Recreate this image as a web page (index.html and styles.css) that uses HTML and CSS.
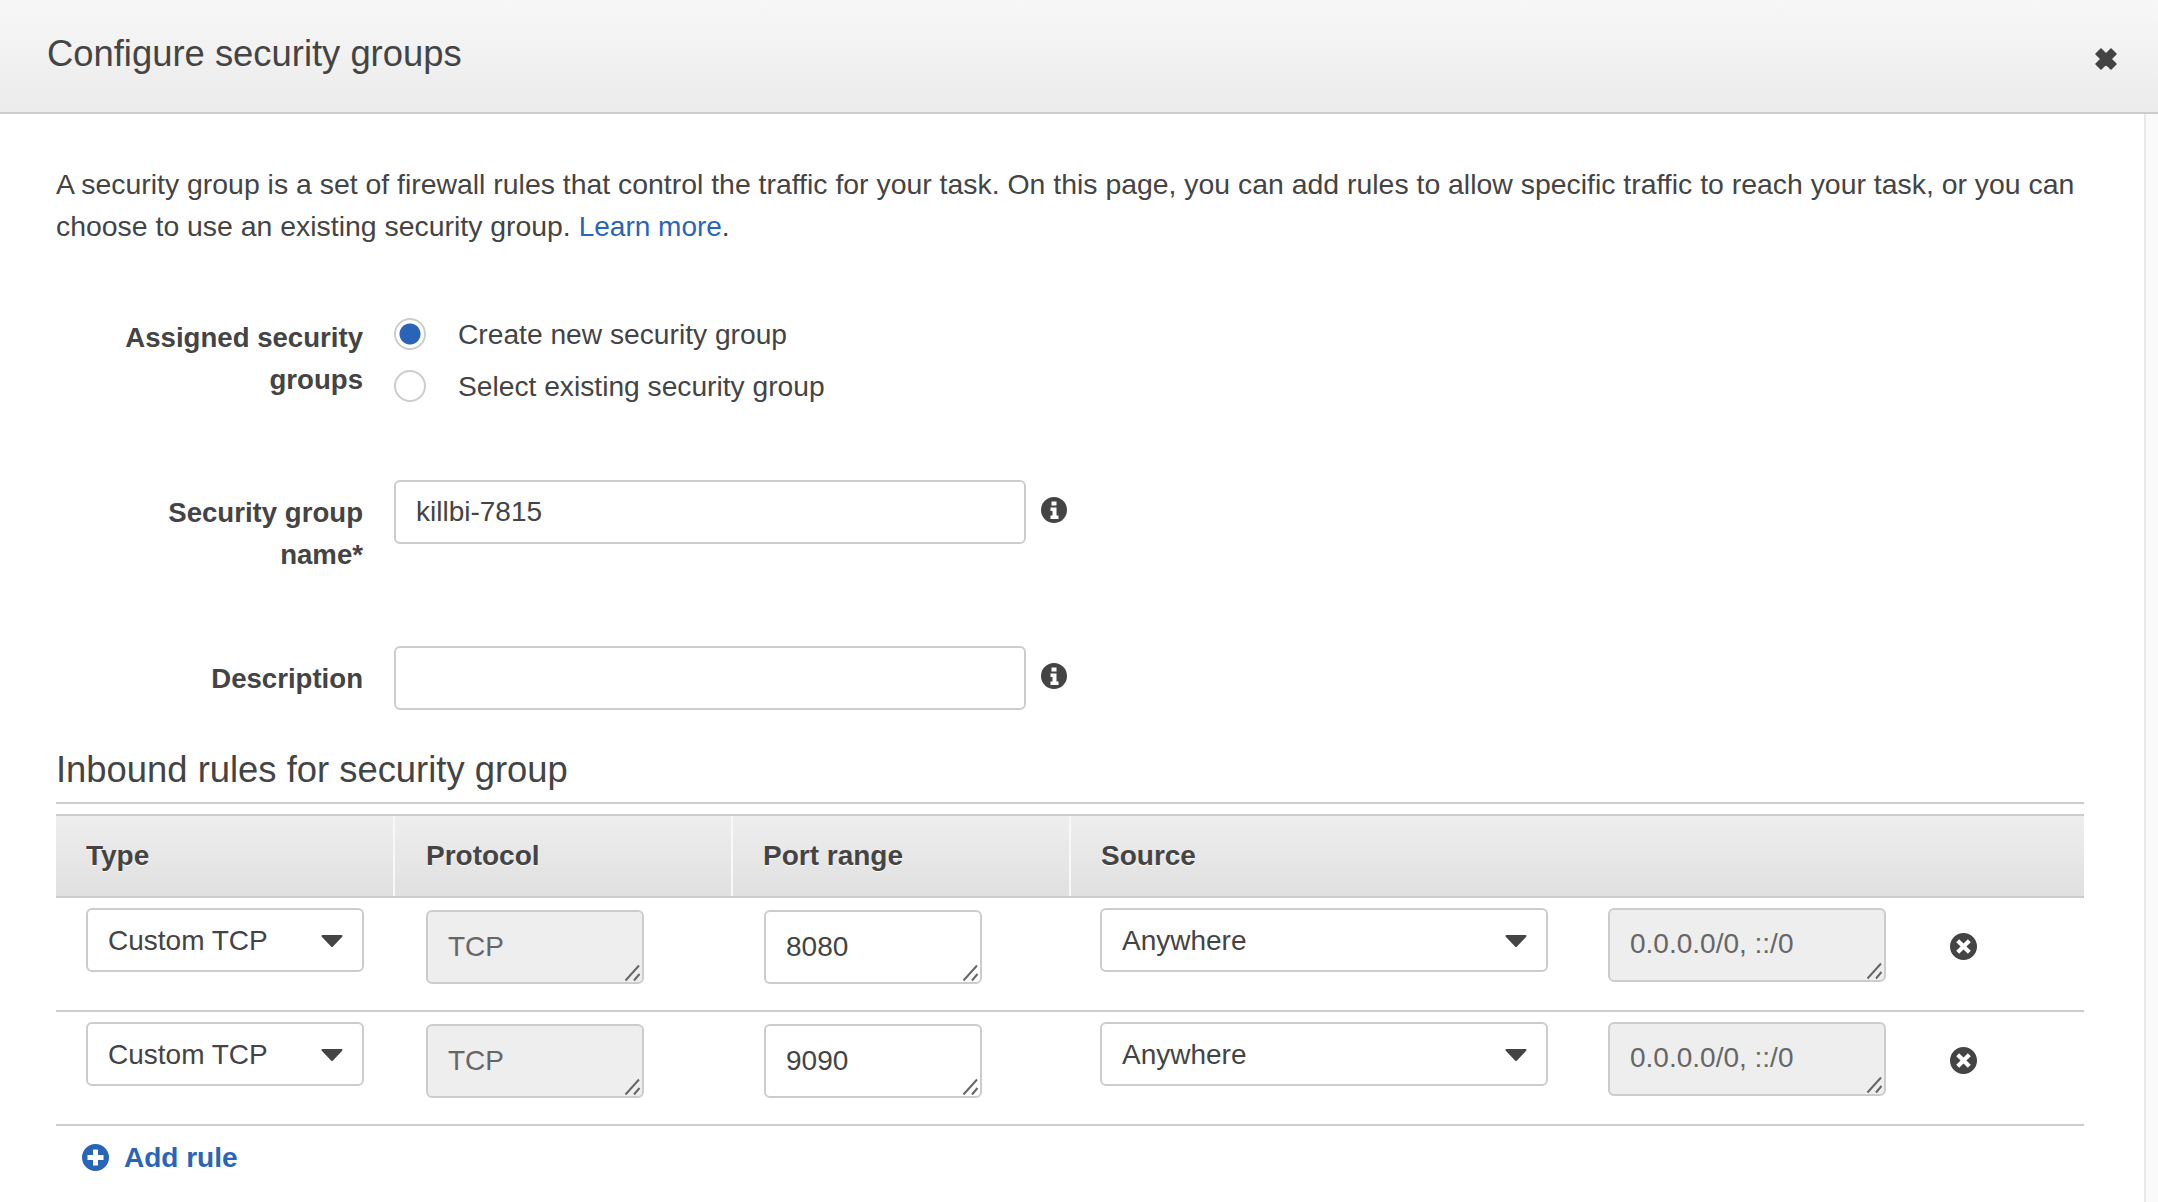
FILE: index.html

```html
<!DOCTYPE html>
<html lang="en">
<head>
  <meta charset="UTF-8" />
  <title>Configure security groups</title>
  <link rel="stylesheet" href="styles.css">
</head>
<body>
  <svg class="defs" width="0" height="0">
    <symbol id="caret" viewBox="0 0 22 12"><path d="M1.500 1 H20.500 L11 11 Z" fill="#444" stroke="#444" stroke-width="2" stroke-linejoin="round"/></symbol>
    <symbol id="info" viewBox="0 0 26 26"><path fill-rule="evenodd" d="M13 0a13 13 0 1 0 0 26a13 13 0 1 0 0-26z M10.500 4.500h5v4h-5z M9.500 10.500h6v8h2v3.500h-8v-3.500h2v-4.500h-2z" fill="#444"/></symbol>
    <symbol id="remove" viewBox="0 0 26 26"><path fill-rule="evenodd" d="M13 0a13 13 0 1 0 0 26a13 13 0 1 0 0-26z M8.800 6l4.200 4.200L17.200 6L20 8.800L15.800 13L20 17.200L17.200 20L13 15.800L8.800 20L6 17.200L10.200 13L6 8.800z" fill="#444"/></symbol>
    <symbol id="grip" viewBox="0 0 18 18"><path d="M1.500 16.500L15 1.500M10 16.500L15.500 10" stroke="#666" stroke-width="2" fill="none"/></symbol>
  </svg>

  <div class="modal-header">
    <h1>Configure security groups</h1>
    <svg class="close" viewBox="0 0 22 22"><path d="M1 6L6 1L11 6L16 1L21 6L16 11L21 16L16 21L11 16L6 21L1 16L6 11Z" fill="#444" stroke="#444" stroke-width="1.500" stroke-linejoin="round"/></svg>
  </div>

  <div class="modal-body">
    <div class="content">
      <p class="intro">A security group is a set of firewall rules that control the traffic for your task. On this page, you can add rules to allow specific traffic to reach your task, or you can choose to use an existing security group. <a href="#">Learn more</a>.</p>

      <div class="form-row row-radios">
        <label class="form-label">Assigned security groups</label>
        <div class="radios">
          <div class="radio-line"><span class="radio checked"></span>Create new security group</div>
          <div class="radio-line"><span class="radio"></span>Select existing security group</div>
        </div>
      </div>

      <div class="form-row row-name">
        <label class="form-label">Security group name*</label>
        <div class="text-input">killbi-7815</div>
        <svg class="info"><use href="#info"/></svg>
      </div>

      <div class="form-row row-desc">
        <label class="form-label">Description</label>
        <div class="text-input"></div>
        <svg class="info"><use href="#info"/></svg>
      </div>

      <h2>Inbound rules for security group</h2>

      <div class="rules">
        <div class="rules-head">
          <div class="th">Type</div>
          <div class="th">Protocol</div>
          <div class="th">Port range</div>
          <div class="th">Source</div>
        </div>

        <div class="rule">
          <div class="cell">
            <div class="select select-type">Custom TCP<svg class="caret"><use href="#caret"/></svg></div>
          </div>
          <div class="cell">
            <div class="area disabled">TCP<svg class="grip"><use href="#grip"/></svg></div>
          </div>
          <div class="cell">
            <div class="area">8080<svg class="grip"><use href="#grip"/></svg></div>
          </div>
          <div class="cell source">
            <div class="select select-source">Anywhere<svg class="caret"><use href="#caret"/></svg></div>
            <div class="area disabled cidr">0.0.0.0/0, ::/0<svg class="grip"><use href="#grip"/></svg></div>
            <svg class="remove"><use href="#remove"/></svg>
          </div>
        </div>

        <div class="rule">
          <div class="cell">
            <div class="select select-type">Custom TCP<svg class="caret"><use href="#caret"/></svg></div>
          </div>
          <div class="cell">
            <div class="area disabled">TCP<svg class="grip"><use href="#grip"/></svg></div>
          </div>
          <div class="cell">
            <div class="area">9090<svg class="grip"><use href="#grip"/></svg></div>
          </div>
          <div class="cell source">
            <div class="select select-source">Anywhere<svg class="caret"><use href="#caret"/></svg></div>
            <div class="area disabled cidr">0.0.0.0/0, ::/0<svg class="grip"><use href="#grip"/></svg></div>
            <svg class="remove"><use href="#remove"/></svg>
          </div>
        </div>
      </div>

      <a class="add-rule" href="#">
        <svg viewBox="0 0 27 27"><path fill-rule="evenodd" d="M13.500 0a13.500 13.500 0 1 0 0 27a13.500 13.500 0 1 0 0-27z M11 5.500h5v5.500h5.500v5h-5.500v5.500h-5v-5.500h-5.500v-5h5.500z" fill="#2a64b8"/></svg>
        Add rule
      </a>
    </div>
  </div>
</body>
</html>
```

FILE: styles.css

```css
* {
  box-sizing: border-box;
}
html, body {
  height: 100%;
}
body {
  margin: 0;
  display: flex;
  flex-direction: column;
  overflow: hidden;
  font-family: "Liberation Sans", Arial, sans-serif;
  font-size: 28px;
  color: #444;
  background: #fff;
}
.defs {
  position: absolute;
}
a {
  color: #2a64b8;
  text-decoration: none;
}

.modal-header {
  height: 114px;
  flex: none;
  display: flex;
  justify-content: space-between;
  padding: 0 41px 0 47px;
  background: linear-gradient(to bottom, #f7f7f7, #ebebeb);
  border-bottom: 2px solid #ccc;
}
.modal-header h1 {
  margin: 35px 0 0;
  font-size: 36.400px;
  line-height: 38px;
  font-weight: normal;
}
.close {
  width: 22px;
  height: 22px;
  margin-top: 48px;
}

.modal-body {
  flex: 1;
  padding-right: 12px;
  background: #fafafa;
}
.content {
  height: 100%;
  background: #fff;
  border-right: 2px solid #e8e8e8;
  padding: 49px 60px 0 56px;
}
.intro {
  margin: 0;
  font-size: 28.420px;
  line-height: 42px;
}
.intro a {
  font-size: 28px;
  line-height: 1;
}

.form-row {
  display: flex;
  align-items: flex-start;
}
.form-label {
  width: 307px;
  margin-right: 31px;
  padding-left: 57px;
  flex: none;
  text-align: right;
  font-size: 27.600px;
  font-weight: bold;
  line-height: 42px;
}
.row-radios {
  margin-top: 70px;
}
.row-name {
  margin-top: 58px;
}
.row-name .form-label,
.row-desc .form-label {
  padding-top: 12px;
}
.row-desc {
  margin-top: 70px;
}
.radios {
  margin-top: 1px;
}
.radio-line {
  display: flex;
  align-items: center;
  height: 32px;
  margin-bottom: 20px;
  font-size: 28.200px;
}
.radio {
  width: 32px;
  height: 32px;
  margin-right: 32px;
  border: 2px solid #ccc;
  border-radius: 50%;
  background: #fff;
}
.radio.checked {
  background: radial-gradient(circle, #2a64b8 0 10px, #fff 11px);
}
.text-input {
  width: 632px;
  height: 64px;
  padding: 0 20px;
  border: 2px solid #ccc;
  border-radius: 6px;
  line-height: 59px;
}
.info {
  width: 26px;
  height: 26px;
  margin: 17px 0 0 15px;
}

h2 {
  margin: 38px 0 0;
  font-size: 36.400px;
  line-height: 44px;
  font-weight: normal;
}

.rules {
  margin-top: 10px;
  border-top: 2px solid #ccc;
  padding-top: 10px;
}
.rules-head {
  display: grid;
  grid-template-columns: 337px 338px 338px 1fr;
  height: 84px;
  background: linear-gradient(to bottom, #eee, #e0e0e0);
  border-top: 2px solid #ccc;
  border-bottom: 2px solid #ccc;
}
.th {
  padding-left: 30px;
  border-left: 2px solid #f8f8f8;
  line-height: 79px;
  font-weight: bold;
  text-shadow: 0 1px 1px #fff;
}
.th:first-child {
  border-left: 0;
}
.th:nth-child(2) {
  padding-left: 31px;
}
.rule {
  display: grid;
  grid-template-columns: 337px 338px 338px 1fr;
  height: 114px;
  border-bottom: 2px solid #ccc;
}
.cell {
  padding: 10px 0 0 30px;
}
.cell + .cell {
  padding-left: 33px;
}
.cell.source {
  display: flex;
  align-items: flex-start;
  padding-left: 31px;
}

.select {
  position: relative;
  height: 64px;
  padding-left: 20px;
  border: 2px solid #ccc;
  border-radius: 6px;
  line-height: 61px;
  background: #fff;
}
.select-type {
  width: 278px;
}
.select-source {
  width: 448px;
  flex: none;
}
.caret {
  position: absolute;
  right: 19px;
  top: 25px;
  width: 22px;
  height: 12px;
}

.area {
  position: relative;
  width: 218px;
  height: 74px;
  margin-top: 2px;
  padding-left: 20px;
  border: 2px solid #ccc;
  border-radius: 6px;
  line-height: 69px;
  background: #fff;
}
.area.disabled {
  background: #eee;
  color: #666;
}
.area.cidr {
  flex: none;
  width: 278px;
  margin: 0 0 0 60px;
  line-height: 68px;
}
.grip {
  position: absolute;
  right: 0;
  bottom: 0;
  width: 18px;
  height: 18px;
}
.remove {
  flex: none;
  width: 27px;
  height: 27px;
  margin: 25px 0 0 64px;
}

.add-rule {
  display: inline-flex;
  align-items: center;
  margin: 16px 0 0 26px;
  font-weight: bold;
  line-height: 32px;
}
.add-rule svg {
  width: 27px;
  height: 27px;
  margin: 0 15px 2px 0;
}
```
